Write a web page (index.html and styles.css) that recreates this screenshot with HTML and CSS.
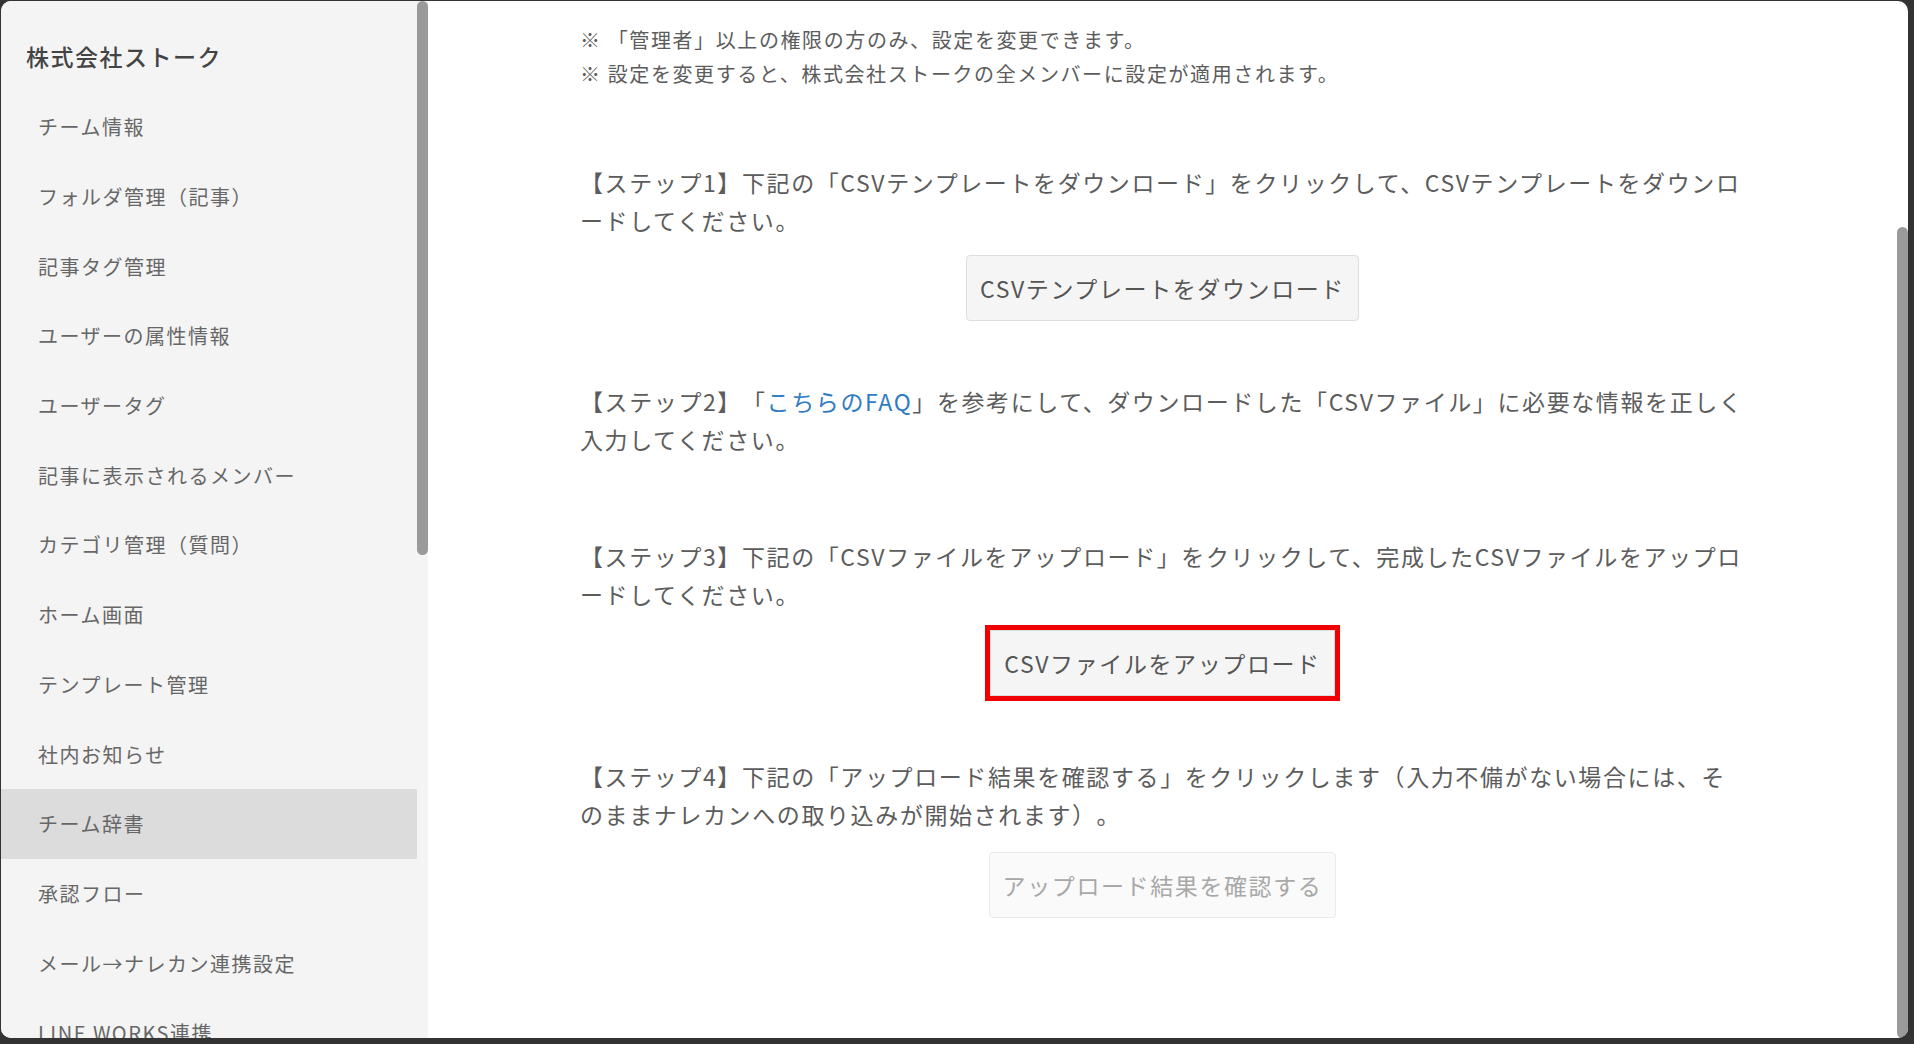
FILE: index.html
```html
<!DOCTYPE html>
<html lang="ja">
<head>
<meta charset="utf-8">
<title>チーム辞書</title>
<link rel="stylesheet" href="styles.css">
</head>
<body>
<div class="window">
  <aside class="sidebar">
    <nav class="nav">
      <div class="nav-title">株式会社ストーク</div>
      <ul class="nav-list">
        <li class="nav-item">チーム情報</li>
        <li class="nav-item">フォルダ管理（記事）</li>
        <li class="nav-item">記事タグ管理</li>
        <li class="nav-item">ユーザーの属性情報</li>
        <li class="nav-item">ユーザータグ</li>
        <li class="nav-item">記事に表示されるメンバー</li>
        <li class="nav-item">カテゴリ管理（質問）</li>
        <li class="nav-item">ホーム画面</li>
        <li class="nav-item">テンプレート管理</li>
        <li class="nav-item">社内お知らせ</li>
        <li class="nav-item nav-item--active">チーム辞書</li>
        <li class="nav-item">承認フロー</li>
        <li class="nav-item">メール→ナレカン連携設定</li>
        <li class="nav-item">LINE WORKS連携</li>
      </ul>
    </nav>
    <div class="track track--side"><div class="thumb thumb--side"></div></div>
  </aside>
  <main class="main">
    <div class="content">
      <div class="notes">
        <p>※ 「管理者」以上の権限の方のみ、設定を変更できます。</p>
        <p>※ 設定を変更すると、株式会社ストークの全メンバーに設定が適用されます。</p>
      </div>
      <div class="steps">
        <section class="step">
          <p class="step-text">【ステップ1】下記の「CSVテンプレートをダウンロード」をクリックして、CSVテンプレートをダウンロードしてください。</p>
          <div class="btn-row"><button class="btn">CSVテンプレートをダウンロード</button></div>
        </section>
        <section class="step">
          <p class="step-text">【ステップ2】「<a class="link" href="#">こちらのFAQ</a>」を参考にして、ダウンロードした「CSVファイル」に必要な情報を正しく入力してください。</p>
        </section>
        <section class="step step--wide">
          <p class="step-text">【ステップ3】下記の「CSVファイルをアップロード」をクリックして、完成したCSVファイルをアップロードしてください。</p>
          <div class="btn-row btn-row--highlight"><button class="btn btn--highlight">CSVファイルをアップロード</button></div>
        </section>
        <section class="step">
          <p class="step-text">【ステップ4】下記の「アップロード結果を確認する」をクリックします（入力不備がない場合には、そのままナレカンへの取り込みが開始されます）。</p>
          <div class="btn-row btn-row--last"><button class="btn btn--disabled">アップロード結果を確認する</button></div>
        </section>
      </div>
    </div>
    <div class="track track--main"><div class="thumb thumb--main"></div></div>
  </main>
</div>
</body>
</html>
```

FILE: styles.css
```css
* {
  box-sizing: border-box;
}

html, body {
  margin: 0;
  padding: 0;
  height: 1044px;
  overflow: hidden;
  background: #333333;
  font-family: "Noto Sans CJK JP", "Noto Sans", sans-serif;
  text-spacing-trim: space-all;
}

.window {
  margin: 1px 6px 6px 1px;
  height: 1037px;
  border-radius: 10px;
  overflow: hidden;
  background: #ffffff;
  display: flex;
}

/* Sidebar */
.sidebar {
  width: 427px;
  flex: none;
  background: #f4f4f4;
  display: flex;
  height: 100%;
}

.nav {
  width: 416px;
  flex: none;
  overflow: hidden;
}

.nav-title {
  padding: 40px 0 21px 25px;
  line-height: 30px;
  font-size: 23px;
  letter-spacing: 1.5px;
  font-weight: 500;
  color: #444444;
}

.nav-list {
  list-style: none;
  margin: 0;
  padding: 0;
}

.nav-item {
  height: 69.7px;
  display: flex;
  align-items: center;
  padding-left: 37px;
  font-size: 20px;
  letter-spacing: 1.5px;
  color: #676767;
}

.nav-item--active {
  background: #dcdcdc;
}

.track {
  width: 11px;
  flex: none;
}

.thumb {
  width: 11px;
  background: #9a9a9a;
  border-radius: 6px;
}

.thumb--side {
  height: 554px;
}

.track--main {
  padding-top: 226px;
  height: 100%;
}

.thumb--main {
  height: 811px;
}

/* Main */
.main {
  flex: 1;
  display: flex;
  min-width: 0;
}

.content {
  flex: 1;
  padding: 22px 152px 0;
  color: #5c5c5c;
}

.notes p {
  margin: 0;
  font-size: 20px;
  letter-spacing: 1.6px;
  line-height: 34px;
}

.steps {
  margin-top: 72px;
}

.step + .step {
  margin-top: 61px;
}

.step + .step--wide {
  margin-top: 79px;
}

.step-text {
  margin: 0;
  font-size: 23px;
  letter-spacing: 1.6px;
  line-height: 38px;
}

.link {
  color: #2f7cc2;
  text-decoration: none;
}

.btn-row {
  margin-top: 16px;
  display: flex;
  justify-content: center;
}

.btn-row--highlight {
  margin-top: 17px;
}

.btn-row--last {
  margin-top: 19px;
}

.btn {
  height: 66px;
  padding: 0 13px;
  font-family: inherit;
  font-size: 23px;
  letter-spacing: 1.6px;
  color: #555555;
  background: #f5f5f5;
  border: 1px solid #dedede;
  border-radius: 4px;
}

.btn--highlight {
  outline: 5px solid #f00000;
  outline-offset: 0;
  border-radius: 0;
}

.btn--disabled {
  color: #a8a8a8;
  background: #fafafa;
  border-color: #ebebeb;
}
```
